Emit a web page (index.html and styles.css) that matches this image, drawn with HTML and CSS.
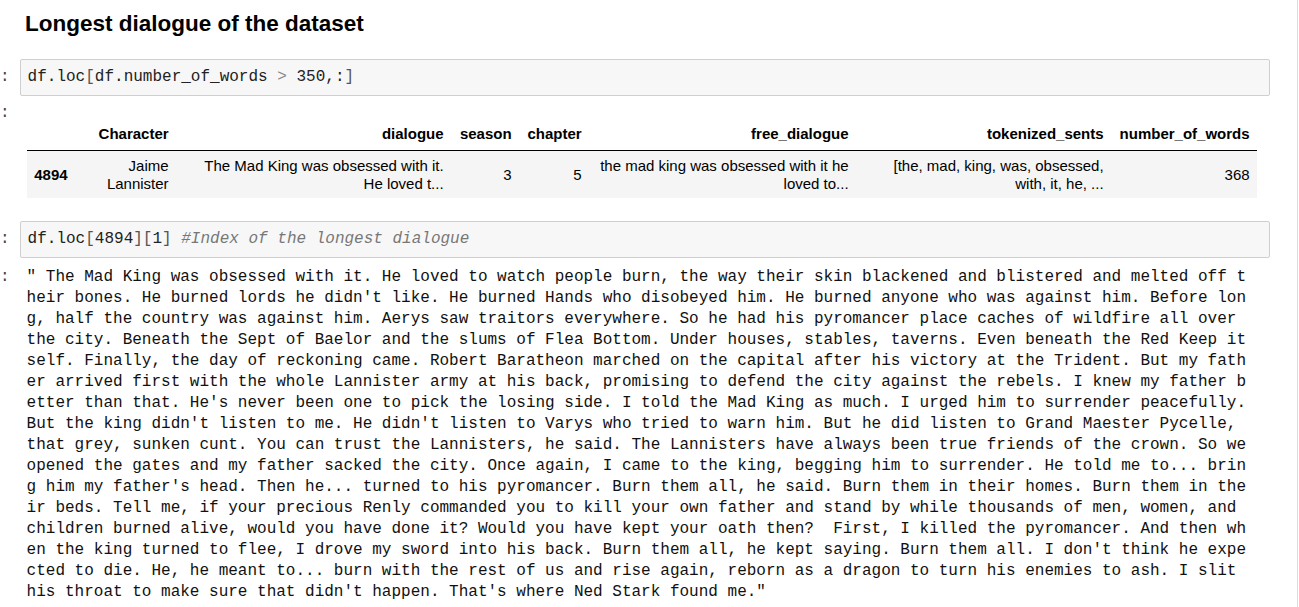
FILE: index.html
```html
<!DOCTYPE html>
<html lang="en">
<head>
<meta charset="utf-8">
<title>Notebook</title>
<link rel="stylesheet" href="styles.css">
</head>
<body>
<div class="notebook">
  <div class="md-cell">
    <h3 class="md-heading">Longest dialogue of the dataset</h3>
  </div>

  <div class="row input-row">
    <div class="prompt">:</div>
    <div class="input-box"><code class="code">df.loc<span class="p">[</span>df.number_of_words <span class="o">&gt;</span> 350,:<span class="p">]</span></code></div>
  </div>
  <div class="row output-row out-html-row">
    <div class="prompt out-prompt">:</div>
    <div class="output-html">
      <table class="df">
        <colgroup>
          <col class="c-idx"><col class="c-char"><col class="c-dia"><col class="c-season"><col class="c-chap"><col class="c-free"><col class="c-tok"><col class="c-num">
        </colgroup>
        <thead>
          <tr>
            <th></th>
            <th>Character</th>
            <th>dialogue</th>
            <th>season</th>
            <th>chapter</th>
            <th>free_dialogue</th>
            <th>tokenized_sents</th>
            <th>number_of_words</th>
          </tr>
        </thead>
        <tbody>
          <tr>
            <th class="idx">4894</th>
            <td>Jaime Lannister</td>
            <td>The Mad King was obsessed with it. He loved t...</td>
            <td>3</td>
            <td>5</td>
            <td>the mad king was obsessed with it he loved to...</td>
            <td>[the, mad, king, was, obsessed, with, it, he, ...</td>
            <td>368</td>
          </tr>
        </tbody>
      </table>
    </div>
  </div>

  <div class="row input-row second-input">
    <div class="prompt">:</div>
    <div class="input-box"><code class="code">df.loc<span class="p">[</span>4894<span class="p">][</span>1<span class="p">]</span> <span class="c">#Index of the longest dialogue</span></code></div>
  </div>
  <div class="row output-row out-text-row">
    <div class="prompt">:</div>
    <pre class="output-text">" The Mad King was obsessed with it. He loved to watch people burn, the way their skin blackened and blistered and melted off their bones. He burned lords he didn't like. He burned Hands who disobeyed him. He burned anyone who was against him. Before long, half the country was against him. Aerys saw traitors everywhere. So he had his pyromancer place caches of wildfire all over the city. Beneath the Sept of Baelor and the slums of Flea Bottom. Under houses, stables, taverns. Even beneath the Red Keep itself. Finally, the day of reckoning came. Robert Baratheon marched on the capital after his victory at the Trident. But my father arrived first with the whole Lannister army at his back, promising to defend the city against the rebels. I knew my father better than that. He's never been one to pick the losing side. I told the Mad King as much. I urged him to surrender peacefully. But the king didn't listen to me. He didn't listen to Varys who tried to warn him. But he did listen to Grand Maester Pycelle, that grey, sunken cunt. You can trust the Lannisters, he said. The Lannisters have always been true friends of the crown. So we opened the gates and my father sacked the city. Once again, I came to the king, begging him to surrender. He told me to... bring him my father's head. Then he... turned to his pyromancer. Burn them all, he said. Burn them in their homes. Burn them in their beds. Tell me, if your precious Renly commanded you to kill your own father and stand by while thousands of men, women, and children burned alive, would you have done it? Would you have kept your oath then?  First, I killed the pyromancer. And then when the king turned to flee, I drove my sword into his back. Burn them all, he kept saying. Burn them all. I don't think he expected to die. He, he meant to... burn with the rest of us and rise again, reborn as a dragon to turn his enemies to ash. I slit his throat to make sure that didn't happen. That's where Ned Stark found me."</pre>
  </div>
</div>
</body>
</html>
```

FILE: styles.css
```css
* {
  box-sizing: border-box;
}

html,
body {
  margin: 0;
  padding: 0;
  background: #ffffff;
}

body {
  font-family: "Liberation Sans", Arial, sans-serif;
  color: #000000;
  overflow: hidden;
}

.notebook {
  width: 1298px;
  min-height: 607px;
  border-right: 1px solid #dcdcdc;
}

.md-cell {
  padding: 10px 0 0 25px;
}

.md-heading {
  margin: 0;
  font-size: 22.5px;
  line-height: 27px;
  font-weight: bold;
  color: #000000;
}

.row {
  display: flex;
  align-items: flex-start;
}

.prompt {
  flex: 0 0 19px;
  padding-right: 10px;
  text-align: right;
  font-family: "Liberation Mono", "DejaVu Sans Mono", monospace;
  font-size: 16px;
  line-height: 21px;
  color: #444444;
}

.input-row {
  margin-top: 22px;
  margin-right: 27px;
}

.input-row .prompt {
  padding-top: 8px;
}

.second-input {
  margin-top: 23px;
}

.input-box {
  flex: 1;
  background: #f7f7f7;
  border: 1px solid #cfcfcf;
  border-radius: 2px;
  padding: 7px 7px;
}

.code {
  font-family: "Liberation Mono", "DejaVu Sans Mono", monospace;
  font-size: 16px;
  line-height: 21px;
  color: #222222;
  white-space: pre;
}

.code .p {
  color: #555555;
}

.code .o {
  color: #888888;
}

.code .c {
  color: #777777;
  font-style: italic;
}

/* dataframe output */
.out-prompt {
  padding-top: 6.5px;
}

.output-html {
  flex: 1;
  padding: 21px 0 0 7px;
}

.df {
  table-layout: fixed;
  border-collapse: collapse;
  border-spacing: 0;
  width: 1230.5px;
  font-size: 15px;
  line-height: 18px;
  color: #000000;
}

.c-idx { width: 48.5px; }
.c-char { width: 101px; }
.c-dia { width: 275px; }
.c-season { width: 68px; }
.c-chap { width: 70px; }
.c-free { width: 267px; }
.c-tok { width: 255px; }
.c-num { width: 146px; }

.df th,
.df td {
  text-align: right;
  padding: 7.5px 7.5px;
  vertical-align: middle;
}

.df thead th {
  font-weight: bold;
  vertical-align: bottom;
  border-bottom: 1px solid #000000;
}

.df tbody tr {
  background: #f5f5f5;
}

.df tbody th,
.df tbody td {
  padding: 5.5px 7.5px;
}

.df tbody th.idx {
  font-weight: bold;
}

/* text output */
.out-text-row {
  margin-top: 8.5px;
}

.output-text {
  margin: 0;
  padding: 0 0 0 7px;
  width: calc(127ch + 9px);
  font-family: "Liberation Mono", "DejaVu Sans Mono", monospace;
  font-size: 16px;
  line-height: 21px;
  color: #111111;
  white-space: pre-wrap;
  word-break: break-all;
}
```
